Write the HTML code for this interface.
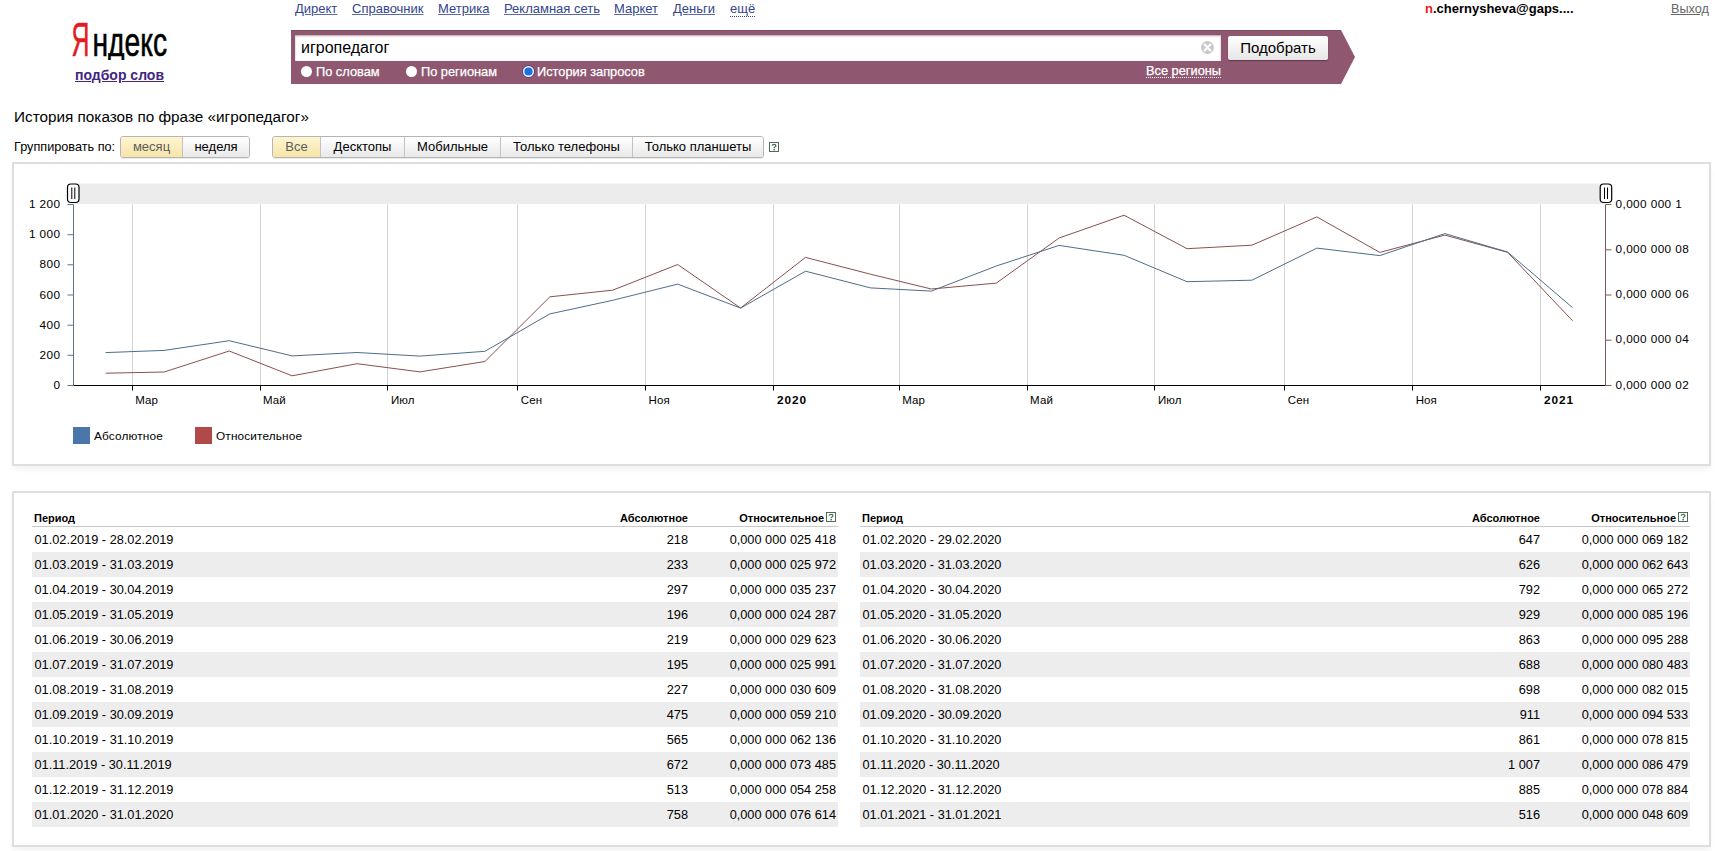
<!DOCTYPE html>
<html><head><meta charset="utf-8"><title>Wordstat</title>
<style>
html,body{margin:0;padding:0;background:#fff;width:1715px;height:851px;overflow:hidden;}
body{font-family:"Liberation Sans",sans-serif;color:#000;position:relative;}
.abs{position:absolute;white-space:nowrap;}
.toplink{position:absolute;top:1px;font-size:13px;line-height:15px;color:#33458c;text-decoration:underline;text-decoration-color:#5a6aa8;white-space:nowrap;}
.logo{position:absolute;left:72px;top:14px;font-size:44px;line-height:50px;white-space:nowrap;transform-origin:0 0;}
.bar{position:absolute;left:291px;top:30px;width:1050px;height:54px;background:#8f5770;box-shadow:inset 0 1px 0 #7f4c63;}
.arrow{position:absolute;left:1341px;top:30px;width:0;height:0;border-top:27px solid transparent;border-bottom:27px solid transparent;border-left:14px solid #8f5770;}
.input{position:absolute;left:295px;top:35px;width:926px;height:26px;background:#fff;box-shadow:inset 0 1px 2px rgba(70,20,45,.4);}
.qtext{position:absolute;left:301px;top:38px;font-size:16px;line-height:19px;white-space:nowrap;}
.clear{position:absolute;left:1201px;top:41px;width:13px;height:13px;border-radius:50%;background:#cfcfcf;}
.btn{position:absolute;left:1228px;top:36px;width:100px;height:24px;border-radius:2px;background:linear-gradient(#fff,#e6e6e6);box-shadow:0 1px 1px rgba(0,0,0,.35);font-size:15px;line-height:24px;text-align:center;}
.radio{position:absolute;top:66px;width:11px;height:11px;border-radius:50%;background:#fff;}
.rlabel{position:absolute;top:64px;font-size:12.8px;line-height:15px;color:#fff;white-space:nowrap;-webkit-text-stroke:0.25px #fff;}
.title{position:absolute;left:14px;top:108px;font-size:15.3px;line-height:18px;white-space:nowrap;}
.grp{position:absolute;left:14px;top:140px;font-size:12.7px;line-height:15px;white-space:nowrap;}
.bgroup{position:absolute;top:136px;height:22px;border:1px solid #b5b5b5;border-radius:3px;box-sizing:border-box;display:flex;overflow:hidden;box-shadow:0 1px 0 rgba(0,0,0,.08);}
.bgroup div{height:20px;line-height:20px;font-size:13px;text-align:center;background:linear-gradient(#fff,#e9e9e9);border-left:1px solid #c2c2c2;box-sizing:border-box;}
.bgroup div:first-child{border-left:none;}
.bgroup div.sel{background:linear-gradient(#fdf5d2,#f6e5a8);color:#5c5c5c;}
.help{position:absolute;width:8px;height:8px;border:1px solid #4f6b55;font-size:10px;line-height:9px;text-align:center;color:#4f6b55;font-weight:bold;font-family:"Liberation Sans",sans-serif;}
.box{position:absolute;left:12px;width:1699px;border:2px solid #dedede;box-sizing:border-box;background:#fff;box-shadow:0 4px 6px -1px rgba(0,0,0,.06);}
.ax{font-family:"Liberation Sans",sans-serif;font-size:11.8px;fill:#000;letter-spacing:0.4px;}
.axb{letter-spacing:0.9px;}
.axm{font-size:11.5px;letter-spacing:0.1px;}
.axl{letter-spacing:0.15px;}
.axb{font-weight:bold;}
.th{position:absolute;font-size:11px;font-weight:bold;line-height:14px;white-space:nowrap;}
.hl{position:absolute;height:1px;background:#c8c8c8;}
.rowbg{position:absolute;height:25px;background:#ededed;}
.td{position:absolute;font-size:12.75px;line-height:25px;white-space:nowrap;}
.r{text-align:right;}
</style></head><body>

<!-- header -->
<svg class="abs" style="left:0;top:0" width="200" height="70">
<text x="71.5" y="56" font-family="Liberation Sans" font-size="47.5" fill="#e31c23" stroke="#e31c23" stroke-width="0.5" textLength="18" lengthAdjust="spacingAndGlyphs">Я</text>
<text x="92.5" y="56" font-family="Liberation Sans" font-size="41" fill="#000" stroke="#000" stroke-width="0.6" textLength="74.5" lengthAdjust="spacingAndGlyphs">ндекс</text>
<rect x="104" y="60" width="24" height="8" fill="#fff"/>
</svg>
<div class="abs" style="left:75px;top:67px;font-size:14px;line-height:17px;font-weight:bold;color:#422681;text-decoration:underline;">подбор слов</div>

<a class="toplink" style="left:295px">Директ</a>
<a class="toplink" style="left:352px">Справочник</a>
<a class="toplink" style="left:438px">Метрика</a>
<a class="toplink" style="left:504px">Рекламная сеть</a>
<a class="toplink" style="left:614px">Маркет</a>
<a class="toplink" style="left:673px">Деньги</a>
<a class="toplink" style="left:730px;text-decoration:none;border-bottom:1px dotted #33458c;line-height:15px;">ещё</a>

<div class="abs" style="left:1425px;top:1px;font-size:13px;line-height:15px;font-weight:bold;"><span style="color:#e61a1a">n</span>.chernysheva@gaps....</div>
<div class="abs" style="left:1671px;top:2px;font-size:12.7px;line-height:15px;color:#666;text-decoration:underline;">Выход</div>

<div class="bar"></div><div class="arrow"></div>
<div class="input"></div>
<div class="qtext">игропедагог</div>
<svg class="abs" style="left:1200px;top:40px" width="15" height="15"><circle cx="7.5" cy="7.5" r="6.5" fill="#c9c9c9"/><path d="M4.6 4.6 L10.4 10.4 M10.4 4.6 L4.6 10.4" stroke="#fff" stroke-width="2.1" stroke-linecap="round"/></svg>
<div class="btn">Подобрать</div>
<div class="radio" style="left:301px"></div><div class="rlabel" style="left:316px">По словам</div>
<div class="radio" style="left:406px"></div><div class="rlabel" style="left:421px">По регионам</div>
<div class="radio" style="left:523px;background:#1f6fe0;box-shadow:inset 0 0 0 1.4px #eef7ff,0 0 0 1px rgba(50,40,110,.45);"></div><div class="rlabel" style="left:537px">История запросов</div>
<div class="rlabel" style="left:1146px;border-bottom:1px dotted #fff;line-height:13px;">Все регионы</div>

<div class="title">История показов по фразе «игропедагог»</div>
<div class="grp">Группировать по:</div>
<div class="bgroup" style="left:120px;width:130px;">
<div class="sel" style="width:61.5px">месяц</div><div style="width:67.5px">неделя</div>
</div>
<div class="bgroup" style="left:272px;width:492px;">
<div class="sel" style="width:47px">Все</div><div style="width:84px">Десктопы</div><div style="width:96px">Мобильные</div><div style="width:132px">Только телефоны</div><div style="width:131px">Только планшеты</div>
</div>
<svg class="abs" style="left:769px;top:142px" width="10" height="10"><rect x="0.5" y="0.5" width="9" height="9" fill="#fff" stroke="#4f6b55" stroke-width="1"/><path d="M3.1 3.7 Q3.3 2.3 5.1 2.3 Q6.9 2.3 6.9 3.7 Q6.9 4.5 5.9 5 Q5.1 5.4 5.1 6.3" fill="none" stroke="#4f6b55" stroke-width="1.3"/><rect x="4.4" y="7" width="1.5" height="1.4" fill="#4f6b55"/></svg>

<div class="box" style="top:162px;height:304px;"></div>
<div class="box" style="top:491px;height:356px;"></div>

<svg width="1715" height="851" style="position:absolute;left:0;top:0">
<rect x="73.5" y="183.5" width="1532.0" height="20.5" fill="#ececec"/>
<line x1="132.5" y1="204.5" x2="132.5" y2="385.5" stroke="#d2d2d2" stroke-width="1"/>
<line x1="132.5" y1="385.5" x2="132.5" y2="390.5" stroke="#000" stroke-width="1"/>
<line x1="260.5" y1="204.5" x2="260.5" y2="385.5" stroke="#d2d2d2" stroke-width="1"/>
<line x1="260.5" y1="385.5" x2="260.5" y2="390.5" stroke="#000" stroke-width="1"/>
<line x1="387.5" y1="204.5" x2="387.5" y2="385.5" stroke="#d2d2d2" stroke-width="1"/>
<line x1="387.5" y1="385.5" x2="387.5" y2="390.5" stroke="#000" stroke-width="1"/>
<line x1="517.5" y1="204.5" x2="517.5" y2="385.5" stroke="#d2d2d2" stroke-width="1"/>
<line x1="517.5" y1="385.5" x2="517.5" y2="390.5" stroke="#000" stroke-width="1"/>
<line x1="645.5" y1="204.5" x2="645.5" y2="385.5" stroke="#d2d2d2" stroke-width="1"/>
<line x1="645.5" y1="385.5" x2="645.5" y2="390.5" stroke="#000" stroke-width="1"/>
<line x1="773.5" y1="204.5" x2="773.5" y2="385.5" stroke="#d2d2d2" stroke-width="1"/>
<line x1="773.5" y1="385.5" x2="773.5" y2="390.5" stroke="#000" stroke-width="1"/>
<line x1="899.5" y1="204.5" x2="899.5" y2="385.5" stroke="#d2d2d2" stroke-width="1"/>
<line x1="899.5" y1="385.5" x2="899.5" y2="390.5" stroke="#000" stroke-width="1"/>
<line x1="1027.5" y1="204.5" x2="1027.5" y2="385.5" stroke="#d2d2d2" stroke-width="1"/>
<line x1="1027.5" y1="385.5" x2="1027.5" y2="390.5" stroke="#000" stroke-width="1"/>
<line x1="1154.5" y1="204.5" x2="1154.5" y2="385.5" stroke="#d2d2d2" stroke-width="1"/>
<line x1="1154.5" y1="385.5" x2="1154.5" y2="390.5" stroke="#000" stroke-width="1"/>
<line x1="1284.5" y1="204.5" x2="1284.5" y2="385.5" stroke="#d2d2d2" stroke-width="1"/>
<line x1="1284.5" y1="385.5" x2="1284.5" y2="390.5" stroke="#000" stroke-width="1"/>
<line x1="1412.5" y1="204.5" x2="1412.5" y2="385.5" stroke="#d2d2d2" stroke-width="1"/>
<line x1="1412.5" y1="385.5" x2="1412.5" y2="390.5" stroke="#000" stroke-width="1"/>
<line x1="1540.5" y1="204.5" x2="1540.5" y2="385.5" stroke="#d2d2d2" stroke-width="1"/>
<line x1="1540.5" y1="385.5" x2="1540.5" y2="390.5" stroke="#000" stroke-width="1"/>
<line x1="73.5" y1="204.5" x2="73.5" y2="385.5" stroke="#5e7487" stroke-width="1"/>
<line x1="1605.5" y1="204.5" x2="1605.5" y2="385.5" stroke="#7a5c5c" stroke-width="1"/>
<line x1="73.5" y1="385.5" x2="1605.5" y2="385.5" stroke="#000" stroke-width="1"/>
<line x1="67.5" y1="385.5" x2="73.5" y2="385.5" stroke="#5e7487" stroke-width="1"/>
<line x1="67.5" y1="355.3" x2="73.5" y2="355.3" stroke="#5e7487" stroke-width="1"/>
<line x1="67.5" y1="325.2" x2="73.5" y2="325.2" stroke="#5e7487" stroke-width="1"/>
<line x1="67.5" y1="295.0" x2="73.5" y2="295.0" stroke="#5e7487" stroke-width="1"/>
<line x1="67.5" y1="264.8" x2="73.5" y2="264.8" stroke="#5e7487" stroke-width="1"/>
<line x1="67.5" y1="234.7" x2="73.5" y2="234.7" stroke="#5e7487" stroke-width="1"/>
<line x1="67.5" y1="204.5" x2="73.5" y2="204.5" stroke="#5e7487" stroke-width="1"/>
<line x1="1605.5" y1="385.5" x2="1611.5" y2="385.5" stroke="#7a5c5c" stroke-width="1"/>
<line x1="1605.5" y1="340.2" x2="1611.5" y2="340.2" stroke="#7a5c5c" stroke-width="1"/>
<line x1="1605.5" y1="295.0" x2="1611.5" y2="295.0" stroke="#7a5c5c" stroke-width="1"/>
<line x1="1605.5" y1="249.8" x2="1611.5" y2="249.8" stroke="#7a5c5c" stroke-width="1"/>
<line x1="1605.5" y1="204.5" x2="1611.5" y2="204.5" stroke="#7a5c5c" stroke-width="1"/>
<polyline points="105.6,373.2 164.2,372.0 229.2,351.0 292.1,375.8 357.1,363.7 419.9,371.9 484.9,361.5 549.9,296.8 612.7,290.2 677.7,264.5 740.6,308.0 805.5,257.4 870.5,274.2 931.3,289.0 996.3,283.1 1059.1,238.0 1124.1,215.2 1187.0,248.7 1251.9,245.2 1316.9,216.9 1379.8,252.4 1444.8,235.1 1507.6,252.3 1572.6,320.8" fill="none" stroke="#8a4f4f" stroke-width="1"/>
<polyline points="105.6,352.6 164.2,350.4 229.2,340.7 292.1,355.9 357.1,352.5 419.9,356.1 484.9,351.3 549.9,313.9 612.7,300.3 677.7,284.1 740.6,308.1 805.5,271.2 870.5,287.9 931.3,291.1 996.3,266.0 1059.1,245.4 1124.1,255.3 1187.0,281.7 1251.9,280.2 1316.9,248.1 1379.8,255.6 1444.8,233.6 1507.6,252.0 1572.6,307.7" fill="none" stroke="#4f6d88" stroke-width="1"/>
<rect x="67.5" y="184" width="11.5" height="18.5" rx="3.5" fill="#fff" stroke="#000" stroke-width="1.2"/>
<line x1="71.8" y1="187.5" x2="71.8" y2="199" stroke="#000" stroke-width="1"/>
<line x1="74.8" y1="187.5" x2="74.8" y2="199" stroke="#000" stroke-width="1"/>
<rect x="1600.2" y="184" width="11.5" height="18.5" rx="3.5" fill="#fff" stroke="#000" stroke-width="1.2"/>
<line x1="1604.5" y1="187.5" x2="1604.5" y2="199" stroke="#000" stroke-width="1"/>
<line x1="1607.5" y1="187.5" x2="1607.5" y2="199" stroke="#000" stroke-width="1"/>
<text x="60.5" y="389.0" text-anchor="end" class="ax">0</text>
<text x="60.5" y="358.8" text-anchor="end" class="ax">200</text>
<text x="60.5" y="328.7" text-anchor="end" class="ax">400</text>
<text x="60.5" y="298.5" text-anchor="end" class="ax">600</text>
<text x="60.5" y="268.3" text-anchor="end" class="ax">800</text>
<text x="60.5" y="238.2" text-anchor="end" class="ax">1 000</text>
<text x="60.5" y="208.0" text-anchor="end" class="ax">1 200</text>
<text x="1615.5" y="388.7" class="ax">0,000 000 02</text>
<text x="1615.5" y="343.4" class="ax">0,000 000 04</text>
<text x="1615.5" y="298.2" class="ax">0,000 000 06</text>
<text x="1615.5" y="252.9" class="ax">0,000 000 08</text>
<text x="1615.5" y="207.7" class="ax">0,000 000 1</text>
<text x="135.2" y="404" class="ax axm">Мар</text>
<text x="263.0" y="404" class="ax axm">Май</text>
<text x="390.9" y="404" class="ax axm">Июл</text>
<text x="520.8" y="404" class="ax axm">Сен</text>
<text x="648.6" y="404" class="ax axm">Ноя</text>
<text x="777.0" y="404" class="ax axb">2020</text>
<text x="902.2" y="404" class="ax axm">Мар</text>
<text x="1030.1" y="404" class="ax axm">Май</text>
<text x="1157.9" y="404" class="ax axm">Июл</text>
<text x="1287.8" y="404" class="ax axm">Сен</text>
<text x="1415.7" y="404" class="ax axm">Ноя</text>
<text x="1544.0" y="404" class="ax axb">2021</text>
<rect x="73" y="427" width="17" height="17" fill="#4a76ab"/>
<text x="94" y="440" class="ax axl">Абсолютное</text>
<rect x="195" y="427" width="17" height="17" fill="#b04a4a"/>
<text x="216" y="440" class="ax axl">Относительное</text>
</svg>

<div class="th" style="left:34px;top:511px">Период</div>
<div class="th r" style="right:1027px;top:511px">Абсолютное</div>
<div class="th r" style="right:891px;top:511px">Относительное</div>
<svg class="abs" style="left:826px;top:512px" width="10" height="10"><rect x="0.5" y="0.5" width="9" height="9" fill="#fff" stroke="#4f6b55" stroke-width="1"/><path d="M3.1 3.7 Q3.3 2.3 5.1 2.3 Q6.9 2.3 6.9 3.7 Q6.9 4.5 5.9 5 Q5.1 5.4 5.1 6.3" fill="none" stroke="#4f6b55" stroke-width="1.3"/><rect x="4.4" y="7" width="1.5" height="1.4" fill="#4f6b55"/></svg>
<div class="hl" style="left:32px;width:806px;top:526px"></div>
<div class="td" style="left:34.5px;top:527px">01.02.2019 - 28.02.2019</div>
<div class="td r" style="right:1027px;top:527px">218</div>
<div class="td r" style="right:879px;top:527px">0,000 000 025 418</div>
<div class="rowbg" style="left:32px;width:806px;top:552px"></div>
<div class="td" style="left:34.5px;top:552px">01.03.2019 - 31.03.2019</div>
<div class="td r" style="right:1027px;top:552px">233</div>
<div class="td r" style="right:879px;top:552px">0,000 000 025 972</div>
<div class="td" style="left:34.5px;top:577px">01.04.2019 - 30.04.2019</div>
<div class="td r" style="right:1027px;top:577px">297</div>
<div class="td r" style="right:879px;top:577px">0,000 000 035 237</div>
<div class="rowbg" style="left:32px;width:806px;top:602px"></div>
<div class="td" style="left:34.5px;top:602px">01.05.2019 - 31.05.2019</div>
<div class="td r" style="right:1027px;top:602px">196</div>
<div class="td r" style="right:879px;top:602px">0,000 000 024 287</div>
<div class="td" style="left:34.5px;top:627px">01.06.2019 - 30.06.2019</div>
<div class="td r" style="right:1027px;top:627px">219</div>
<div class="td r" style="right:879px;top:627px">0,000 000 029 623</div>
<div class="rowbg" style="left:32px;width:806px;top:652px"></div>
<div class="td" style="left:34.5px;top:652px">01.07.2019 - 31.07.2019</div>
<div class="td r" style="right:1027px;top:652px">195</div>
<div class="td r" style="right:879px;top:652px">0,000 000 025 991</div>
<div class="td" style="left:34.5px;top:677px">01.08.2019 - 31.08.2019</div>
<div class="td r" style="right:1027px;top:677px">227</div>
<div class="td r" style="right:879px;top:677px">0,000 000 030 609</div>
<div class="rowbg" style="left:32px;width:806px;top:702px"></div>
<div class="td" style="left:34.5px;top:702px">01.09.2019 - 30.09.2019</div>
<div class="td r" style="right:1027px;top:702px">475</div>
<div class="td r" style="right:879px;top:702px">0,000 000 059 210</div>
<div class="td" style="left:34.5px;top:727px">01.10.2019 - 31.10.2019</div>
<div class="td r" style="right:1027px;top:727px">565</div>
<div class="td r" style="right:879px;top:727px">0,000 000 062 136</div>
<div class="rowbg" style="left:32px;width:806px;top:752px"></div>
<div class="td" style="left:34.5px;top:752px">01.11.2019 - 30.11.2019</div>
<div class="td r" style="right:1027px;top:752px">672</div>
<div class="td r" style="right:879px;top:752px">0,000 000 073 485</div>
<div class="td" style="left:34.5px;top:777px">01.12.2019 - 31.12.2019</div>
<div class="td r" style="right:1027px;top:777px">513</div>
<div class="td r" style="right:879px;top:777px">0,000 000 054 258</div>
<div class="rowbg" style="left:32px;width:806px;top:802px"></div>
<div class="td" style="left:34.5px;top:802px">01.01.2020 - 31.01.2020</div>
<div class="td r" style="right:1027px;top:802px">758</div>
<div class="td r" style="right:879px;top:802px">0,000 000 076 614</div>
<div class="th" style="left:862px;top:511px">Период</div>
<div class="th r" style="right:175px;top:511px">Абсолютное</div>
<div class="th r" style="right:39px;top:511px">Относительное</div>
<svg class="abs" style="left:1678px;top:512px" width="10" height="10"><rect x="0.5" y="0.5" width="9" height="9" fill="#fff" stroke="#4f6b55" stroke-width="1"/><path d="M3.1 3.7 Q3.3 2.3 5.1 2.3 Q6.9 2.3 6.9 3.7 Q6.9 4.5 5.9 5 Q5.1 5.4 5.1 6.3" fill="none" stroke="#4f6b55" stroke-width="1.3"/><rect x="4.4" y="7" width="1.5" height="1.4" fill="#4f6b55"/></svg>
<div class="hl" style="left:860px;width:830px;top:526px"></div>
<div class="td" style="left:862.5px;top:527px">01.02.2020 - 29.02.2020</div>
<div class="td r" style="right:175px;top:527px">647</div>
<div class="td r" style="right:27px;top:527px">0,000 000 069 182</div>
<div class="rowbg" style="left:860px;width:830px;top:552px"></div>
<div class="td" style="left:862.5px;top:552px">01.03.2020 - 31.03.2020</div>
<div class="td r" style="right:175px;top:552px">626</div>
<div class="td r" style="right:27px;top:552px">0,000 000 062 643</div>
<div class="td" style="left:862.5px;top:577px">01.04.2020 - 30.04.2020</div>
<div class="td r" style="right:175px;top:577px">792</div>
<div class="td r" style="right:27px;top:577px">0,000 000 065 272</div>
<div class="rowbg" style="left:860px;width:830px;top:602px"></div>
<div class="td" style="left:862.5px;top:602px">01.05.2020 - 31.05.2020</div>
<div class="td r" style="right:175px;top:602px">929</div>
<div class="td r" style="right:27px;top:602px">0,000 000 085 196</div>
<div class="td" style="left:862.5px;top:627px">01.06.2020 - 30.06.2020</div>
<div class="td r" style="right:175px;top:627px">863</div>
<div class="td r" style="right:27px;top:627px">0,000 000 095 288</div>
<div class="rowbg" style="left:860px;width:830px;top:652px"></div>
<div class="td" style="left:862.5px;top:652px">01.07.2020 - 31.07.2020</div>
<div class="td r" style="right:175px;top:652px">688</div>
<div class="td r" style="right:27px;top:652px">0,000 000 080 483</div>
<div class="td" style="left:862.5px;top:677px">01.08.2020 - 31.08.2020</div>
<div class="td r" style="right:175px;top:677px">698</div>
<div class="td r" style="right:27px;top:677px">0,000 000 082 015</div>
<div class="rowbg" style="left:860px;width:830px;top:702px"></div>
<div class="td" style="left:862.5px;top:702px">01.09.2020 - 30.09.2020</div>
<div class="td r" style="right:175px;top:702px">911</div>
<div class="td r" style="right:27px;top:702px">0,000 000 094 533</div>
<div class="td" style="left:862.5px;top:727px">01.10.2020 - 31.10.2020</div>
<div class="td r" style="right:175px;top:727px">861</div>
<div class="td r" style="right:27px;top:727px">0,000 000 078 815</div>
<div class="rowbg" style="left:860px;width:830px;top:752px"></div>
<div class="td" style="left:862.5px;top:752px">01.11.2020 - 30.11.2020</div>
<div class="td r" style="right:175px;top:752px">1 007</div>
<div class="td r" style="right:27px;top:752px">0,000 000 086 479</div>
<div class="td" style="left:862.5px;top:777px">01.12.2020 - 31.12.2020</div>
<div class="td r" style="right:175px;top:777px">885</div>
<div class="td r" style="right:27px;top:777px">0,000 000 078 884</div>
<div class="rowbg" style="left:860px;width:830px;top:802px"></div>
<div class="td" style="left:862.5px;top:802px">01.01.2021 - 31.01.2021</div>
<div class="td r" style="right:175px;top:802px">516</div>
<div class="td r" style="right:27px;top:802px">0,000 000 048 609</div>

</body></html>
